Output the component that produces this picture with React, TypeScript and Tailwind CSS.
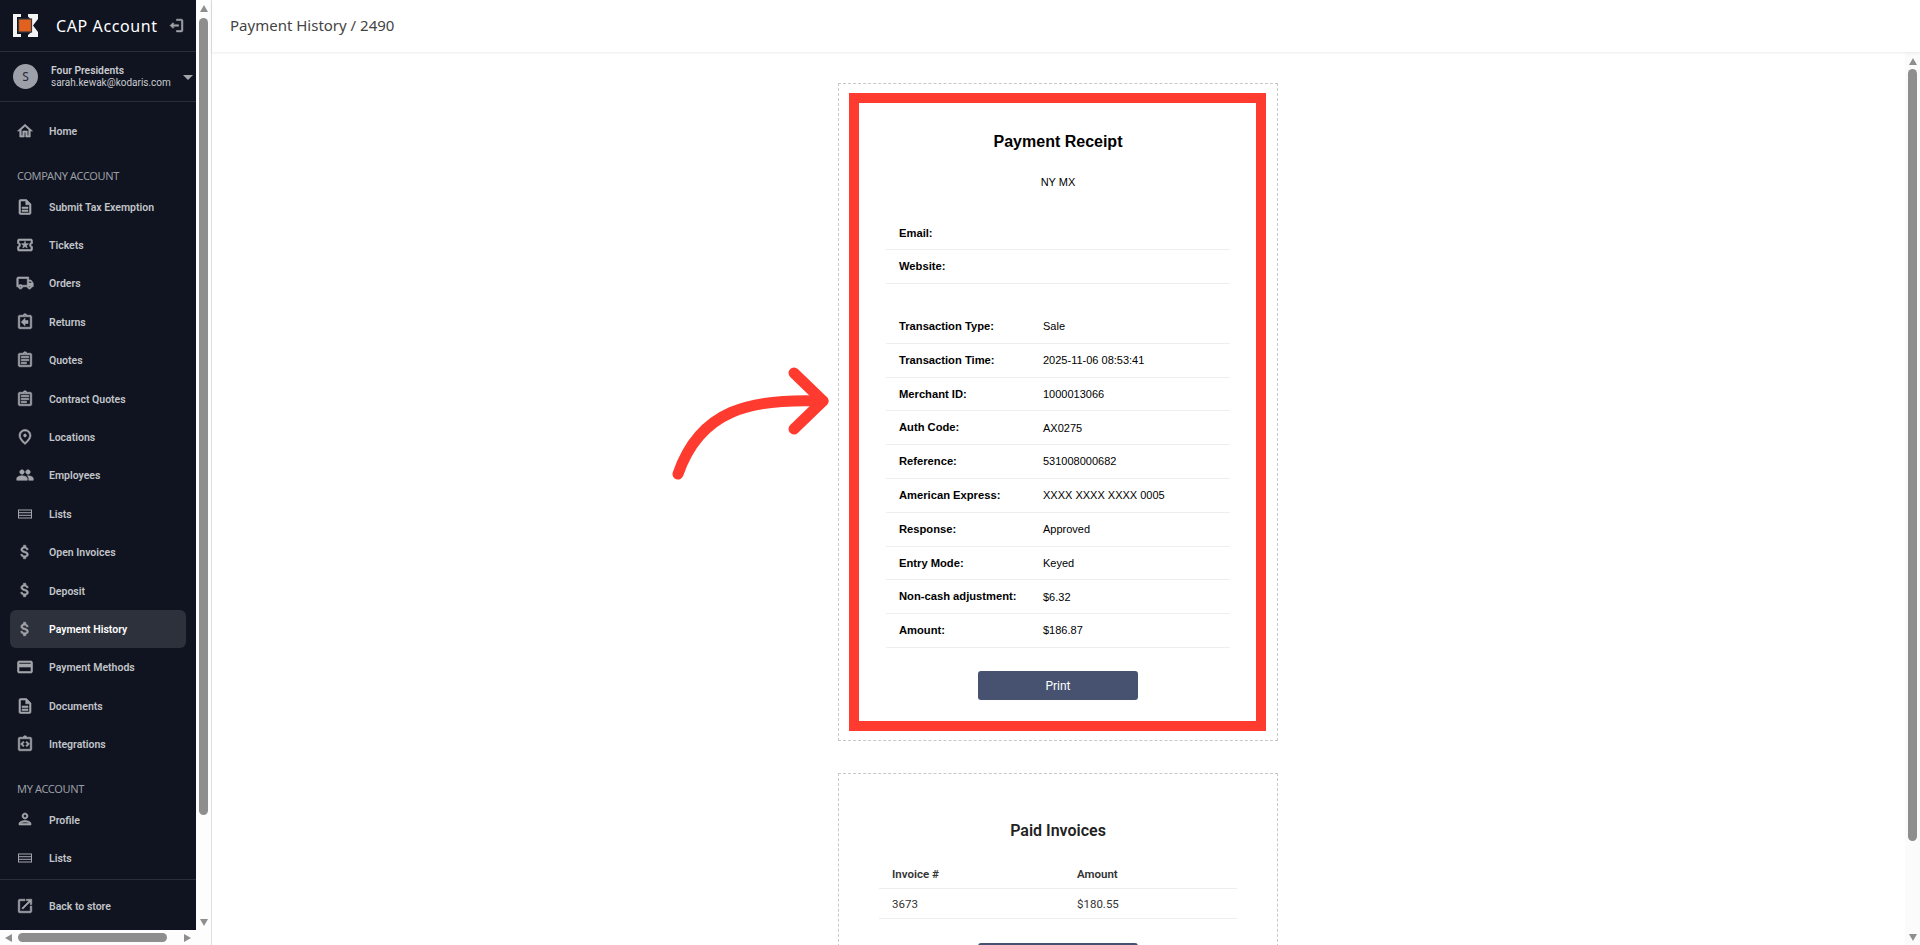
import React from "react";
import {
  MdOutlineHome, MdOutlineDescription, MdOutlineLocalActivity, MdOutlineLocalShipping,
  MdOutlineAssignmentReturn, MdOutlineAssignment, MdOutlinePlace, MdPeople,
  MdAttachMoney, MdOutlineCreditCard, MdOutlineIntegrationInstructions, MdOutlinePerson,
  MdOutlineOpenInNew, MdOutlineLogout, MdArrowDropDown,
} from "react-icons/md";

type IconType = React.ComponentType<{ className?: string; strokeWidth?: number }>;
type Item = { label: string; icon: IconType; active?: boolean };

function ListsIcon({ className }: { className?: string }) {
  return (
    <svg className={className} viewBox="0 0 18 18" fill="none" stroke="currentColor" strokeWidth="1">
      <rect x="2.500" y="5" width="13" height="8" />
      <path d="M2.500 7.700h13M2.500 10.300h13" />
    </svg>
  );
}

const company: Item[] = [
  { label: "Submit Tax Exemption", icon: MdOutlineDescription },
  { label: "Tickets", icon: MdOutlineLocalActivity },
  { label: "Orders", icon: MdOutlineLocalShipping },
  { label: "Returns", icon: MdOutlineAssignmentReturn },
  { label: "Quotes", icon: MdOutlineAssignment },
  { label: "Contract Quotes", icon: MdOutlineAssignment },
  { label: "Locations", icon: MdOutlinePlace },
  { label: "Employees", icon: MdPeople },
  { label: "Lists", icon: ListsIcon },
  { label: "Open Invoices", icon: MdAttachMoney },
  { label: "Deposit", icon: MdAttachMoney },
  { label: "Payment History", icon: MdAttachMoney, active: true },
  { label: "Payment Methods", icon: MdOutlineCreditCard },
  { label: "Documents", icon: MdOutlineDescription },
  { label: "Integrations", icon: MdOutlineIntegrationInstructions },
];

const mine: Item[] = [
  { label: "Profile", icon: MdOutlinePerson },
  { label: "Lists", icon: ListsIcon },
];

const receipt = [
  ["Transaction Type:", "Sale"],
  ["Transaction Time:", "2025-11-06 08:53:41"],
  ["Merchant ID:", "1000013066"],
  ["Auth Code:", "AX0275"],
  ["Reference:", "531008000682"],
  ["American Express:", "XXXX XXXX XXXX 0005"],
  ["Response:", "Approved"],
  ["Entry Mode:", "Keyed"],
  ["Non-cash adjustment:", "$6.32"],
  ["Amount:", "$186.87"],
];

function NavRow({ item }: { item: Item }) {
  const Icon = item.icon;
  return (
    <div
      className={
        item.active
          ? "mx-[10px] h-[38.4px] flex items-center rounded-[6px] bg-[#2d313c] pl-[6px] text-white"
          : "mx-[10px] h-[38.4px] flex items-center pl-[6px] text-[#c2c4c9]"
      }
    >
      <Icon className="w-[18px] h-[18px] text-[#a3a5aa] shrink-0 [&_path[fill='none']]:stroke-0" strokeWidth={0.8} />
      <span className="ml-[15px] pt-[2px] text-[10.500px] font-semibold whitespace-nowrap font-['Roboto']">{item.label}</span>
    </div>
  );
}

function Category({ label }: { label: string }) {
  return (
    <div className="h-[37px] pl-[17px] pt-[18px] text-[11px] leading-[15px] tracking-[-0.35px] text-[#9b9da3] whitespace-nowrap">
      {label}
    </div>
  );
}

function Logo() {
  return (
    <svg width="26" height="25" viewBox="0 0 26 25" className="shrink-0">
      <path d="M0 1h8v3H4v17h4v3H0z" fill="#f4f4f4" />
      <path d="M15 1h10v5l-5 6.500 5 6.500v5H15l0-2 4-3.500-1-12-3-3z" fill="#f4f4f4" />
      <rect x="5.500" y="6" width="13" height="13" fill="#e2611f" stroke="#3b3a3c" strokeWidth="1.200" />
    </svg>
  );
}

function Sidebar() {
  return (
    <div className="w-[212px] h-full shrink-0 flex flex-col border-r border-[#dfdfdf] bg-[#fdfdfd]">
      <div className="flex h-[930px]">
        <div className="w-[196px] h-full bg-[#0f1420] flex flex-col">
          <div className="h-[52px] shrink-0 border-b border-[#2a2e39] flex items-center pl-[13px]">
            <Logo />
            <span className="ml-[17px] text-[16px] tracking-[0.6px] text-white whitespace-nowrap">CAP Account</span>
            <MdOutlineLogout className="ml-[10px] w-[17px] h-[17px] rotate-180 text-[#a3a5aa] shrink-0 [&_path[fill='none']]:stroke-0" strokeWidth={0.8} />
          </div>
          <div className="h-[50px] shrink-0 border-b border-[#2a2e39] flex items-center pl-[13px]">
            <div className="w-[25px] h-[25px] rounded-full bg-[#9da0a8] flex items-center justify-center text-[12px] text-[#24283a] shrink-0">
              S
            </div>
            <div className="ml-[13px] flex flex-col text-[10px] leading-[12px] font-['Roboto']">
              <span className="text-[10.300px] font-semibold text-[#c9cbd0] whitespace-nowrap">Four Presidents</span>
              <span className="text-[#c9cbd0] whitespace-nowrap">sarah.kewak@kodaris.com</span>
            </div>
            <MdArrowDropDown className="ml-auto mr-[-4px] w-[24px] h-[24px] text-[#a3a5aa] shrink-0" />
          </div>
          <div className="pt-[10px] shrink-0">
            <NavRow item={{ label: "Home", icon: MdOutlineHome }} />
          </div>
          <Category label="COMPANY ACCOUNT" />
          {company.map((i) => (
            <NavRow key={i.label} item={i} />
          ))}
          <Category label="MY ACCOUNT" />
          {mine.map((i) => (
            <NavRow key={i.label} item={i} />
          ))}
          <div className="mt-[2px] pt-[7px] border-t border-[#2a2e39]">
            <NavRow item={{ label: "Back to store", icon: MdOutlineOpenInNew }} />
          </div>
        </div>
        <div className="w-[15px] h-full flex flex-col items-center">
          <div className="mt-[5px] w-0 h-0 border-x-[4.500px] border-x-transparent border-b-[7px] border-b-[#8e8e8e]" />
          <div className="mt-[6px] w-[9px] h-[797px] rounded-[5px] bg-[#8e8e8e]" />
          <div className="mt-[104px] w-0 h-0 border-x-[4.500px] border-x-transparent border-t-[7px] border-t-[#8e8e8e]" />
        </div>
      </div>
      <div className="h-[15px] w-[196px] flex items-center">
        <div className="ml-[5px] w-0 h-0 border-y-[4.500px] border-y-transparent border-r-[7px] border-r-[#8e8e8e]" />
        <div className="ml-[6px] w-[149px] h-[9px] rounded-[5px] bg-[#8e8e8e]" />
        <div className="ml-[17px] w-0 h-0 border-y-[4.500px] border-y-transparent border-l-[7px] border-l-[#8e8e8e]" />
      </div>
    </div>
  );
}

function ReceiptRow({ label, value, pitch }: { label: string; value?: string; pitch: string }) {
  return (
    <div className={`${pitch} flex items-center border-b border-[#eeeeee] pl-[13px]`}>
      <span className="w-[144px] text-[11.200px] font-bold text-black whitespace-nowrap">{label}</span>
      {value && <span className="text-black whitespace-nowrap">{value}</span>}
    </div>
  );
}

function Arrow() {
  return (
    <svg
      className="absolute left-[-169px] top-[281px] w-[165px] h-[115px]"
      viewBox="0 0 165 115"
      fill="none"
      stroke="#ff3b2f"
      strokeWidth="11"
      strokeLinecap="round"
      strokeLinejoin="round"
    >
      <path d="M8 109C30 45 80 33 153 36" />
      <path d="M124 8L153 36L124 64" />
    </svg>
  );
}

function Main() {
  return (
    <div className="flex-1 min-w-0 h-full flex flex-col">
      <div className="relative z-10 h-[52px] shrink-0 bg-white flex items-center pl-[18px] pb-[2px] shadow-[0_1px_3px_rgba(0,0,0,0.08)]">
        <span className="text-[15px] text-[#444444]">Payment History / 2490</span>
      </div>
      <div className="flex-1 min-h-0 flex">
        <div className="flex-1 min-w-0 overflow-hidden pt-[31px] pr-[1px]">
          <div
            className="relative mx-auto w-[440px] h-[658px] border border-dashed border-[#c8c8c8] pt-[47px] text-[11px] text-black"
            style={{ fontFamily: '"Liberation Sans", Arial, sans-serif' }}
          >
            <Arrow />
            <div className="absolute left-[10px] top-[9px] right-[11px] bottom-[9px] border-[10px] border-[#ff3b2f]" />
            <div className="h-[22px] leading-[22px] text-center text-[16px] font-bold">Payment Receipt</div>
            <div className="mt-[22px] h-[14px] leading-[14px] text-center">NY MX</div>
            <div className="mx-auto mt-[28px] w-[344px]">
              <ReceiptRow label="Email:" pitch="h-[33px]" />
              <ReceiptRow label="Website:" pitch="h-[34px]" />
              <div className="h-[26px]" />
              {receipt.map(([l, v]) => (
                <ReceiptRow key={l} label={l} value={v} pitch="h-[33.800px]" />
              ))}
            </div>
            <div className="mx-auto mt-[23px] w-[160px] h-[29px] pt-[1px] rounded-[3px] bg-[#465270] flex items-center justify-center text-white text-[12px] font-['Roboto']">
              Print
            </div>
          </div>
          <div className="mx-auto mt-[32px] w-[440px] h-[400px] border border-dashed border-[#c8c8c8] pt-[45px] text-[#333333] font-['Roboto']">
            <div className="h-[24px] leading-[24px] text-center text-[16px] font-semibold text-[#222222]">Paid Invoices</div>
            <div className="mx-auto mt-[16px] w-[358px] text-[11.500px]">
              <div className="h-[30px] flex items-center border-b border-[#eeeeee] pl-[13px] pt-[2px] font-semibold">
                <span className="w-[185px]">Invoice #</span>
                <span>Amount</span>
              </div>
              <div className="h-[30px] flex items-center border-b border-[#eeeeee] pl-[13px] pt-[2px]">
                <span className="w-[185px]">3673</span>
                <span>$180.55</span>
              </div>
            </div>
            <div className="mx-auto mt-[24px] w-[160px] h-[29px] rounded-[3px] bg-[#465270]" />
          </div>
        </div>
        <div className="w-[15px] h-full shrink-0 bg-[#fbfbfb] flex flex-col items-center">
          <div className="mt-[6px] w-0 h-0 border-x-[4.500px] border-x-transparent border-b-[7px] border-b-[#8e8e8e]" />
          <div className="mt-[4px] w-[9px] h-[772px] rounded-[5px] bg-[#8e8e8e]" />
          <div className="mt-[93px] w-0 h-0 border-x-[4.500px] border-x-transparent border-t-[7px] border-t-[#8e8e8e]" />
        </div>
      </div>
    </div>
  );
}

export default function App() {
  return (
    <div
      className="w-[1920px] h-[945px] flex overflow-hidden bg-white"
      style={{ fontFamily: '"Noto Sans", "Open Sans", sans-serif' }}
    >
      <Sidebar />
      <Main />
    </div>
  );
}
